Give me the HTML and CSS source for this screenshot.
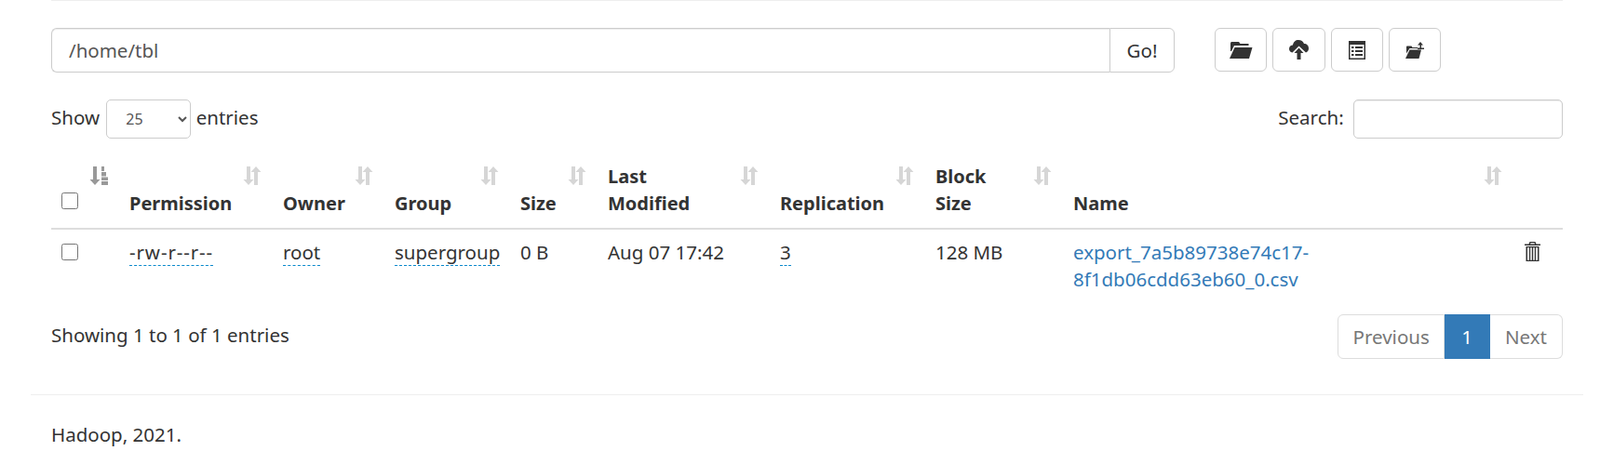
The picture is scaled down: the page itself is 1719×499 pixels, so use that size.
FILE: index.html
```html
<!DOCTYPE html>
<html lang="en">
  <head>
    <meta charset="UTF-8" />
    <title>Browsing HDFS</title>
    <link rel="stylesheet" href="styles.css">
  </head>
  <body>
    <svg class="defs" width="0" height="0">
      <symbol id="sort" viewBox="0 0 20 20">
        <path d="M4 0h4v14h3.500l-5.500 6-5.500-6h3.500z"/>
        <path d="M12 20v-14h-3.500l5.500-6 5.500 6h-3.500v14z"/>
      </symbol>
    </svg>

    <div class="wrap">
      <div class="top-rule"></div>

      <div class="toolbar">
        <div class="path-group">
          <input class="path-input" type="text" value="/home/tbl">
          <button class="go-btn">Go!</button>
        </div>
        <div class="tools">
          <button class="tool-btn">
            <svg width="26" height="18" viewBox="0 0 26 18"><path d="M3 0h8l1.500 2h9v2h-15.500l-3 6-1 0v-8a2 2 0 0 1 1-2z"/><path d="M6.500 6h19l-3.500 12h-21z"/></svg>
          </button>
          <button class="tool-btn">
            <svg width="21" height="21" viewBox="0 0 21 21"><path d="M3.500 13.500c-2.500-.5-3.500-2.500-3.500-4 0-2.500 2-4 4-4 .5-3.500 3-5.500 6-5.500s5 1.500 6 4c3 0 5 2 5 5 0 2-1 3.500-3 4.500l-7.500-7z"/><path d="M10.500 8.500l5 5.500h-3v7h-4v-7h-3z"/></svg>
          </button>
          <button class="tool-btn">
            <svg width="18" height="20" viewBox="0 0 18 20"><path fill-rule="evenodd" d="M0 0h18v20h-18zM1.500 4v14.500h15v-14.500zM3 6h2.500v2h-2.500zM7 6h8v2h-8zM3 10h2.500v2h-2.500zM7 10h8v2h-8zM3 14h2.500v2h-2.500zM7 14h8v2h-8z"/></svg>
          </button>
          <button class="tool-btn">
            <svg width="20" height="18" viewBox="0 0 20 18"><path d="M1.500 4.500h5l1 1.500h5.500v1h-8.500l-3.500 5.500v-7a1 1 0 0 1 .5-1z"/><path d="M4.500 8.500h12.500l-2.500 9.500h-14.500z"/><path d="M16 0l3 3.500h-2v3h3v1.500h-7v-1.500h2.500v-3h-2.500z"/></svg>
          </button>
        </div>
      </div>

      <div class="dt-top">
        <label class="dt-length">Show
          <select class="dt-select"><option>25</option><option>50</option></select>
          entries</label>
        <label class="dt-search">Search: <input class="search-input" type="search"></label>
      </div>

      <table class="files">
        <colgroup>
          <col class="c-check"><col class="c-perm"><col class="c-owner"><col class="c-group"><col class="c-size">
          <col class="c-date"><col class="c-repl"><col class="c-block"><col class="c-name"><col class="c-del">
        </colgroup>
        <thead>
          <tr>
            <th>
              <input type="checkbox">
              <svg class="sort-icon active" viewBox="0 0 20 20"><path d="M4 0h4v14h3.500l-5.500 6-5.500-6h3.500z"/><path d="M13 0h3v5h-3zM13 6h5v4.500h-5zM13 11.500h7v3.500h-7zM13 16h7v4h-7z"/></svg>
            </th>
            <th>Permission<svg class="sort-icon"><use href="#sort"/></svg></th>
            <th>Owner<svg class="sort-icon"><use href="#sort"/></svg></th>
            <th>Group<svg class="sort-icon"><use href="#sort"/></svg></th>
            <th>Size<svg class="sort-icon"><use href="#sort"/></svg></th>
            <th>Last Modified<svg class="sort-icon"><use href="#sort"/></svg></th>
            <th>Replication<svg class="sort-icon"><use href="#sort"/></svg></th>
            <th>Block Size<svg class="sort-icon"><use href="#sort"/></svg></th>
            <th>Name<svg class="sort-icon"><use href="#sort"/></svg></th>
            <th></th>
          </tr>
        </thead>
        <tbody>
          <tr>
            <td><input type="checkbox"></td>
            <td><span class="editable perm">-rw-r--r--</span></td>
            <td><span class="editable">root</span></td>
            <td><span class="editable">supergroup</span></td>
            <td>0 B</td>
            <td>Aug 07 17:42</td>
            <td><span class="editable">3</span></td>
            <td>128 MB</td>
            <td><a class="file-link" href="#">export_7a5b89738e74c17-8f1db06cdd63eb60_0.csv</a></td>
            <td>
              <svg class="trash" width="17" height="21" viewBox="0 0 17 21"><path fill-rule="evenodd" d="M5.500 0h6l1 2.500h4.500v1.500h-17v-1.500h4.500zM6.500 1.200l-.5 1.300h5l-.5-1.300zM1.500 5h14v16h-14zM3 6.200v13.600h2v-13.600zM6.200 6.200v13.600h1.600v-13.600zM9.200 6.200v13.600h1.600v-13.600zM12 6.200v13.600h2v-13.600z"/></svg>
            </td>
          </tr>
        </tbody>
      </table>

      <div class="dt-bottom">
        <div class="dt-info">Showing 1 to 1 of 1 entries</div>
        <div class="pager">
          <a class="page-link" href="#">Previous</a>
          <a class="page-link current" href="#">1</a>
          <a class="page-link" href="#">Next</a>
        </div>
      </div>

      <hr class="foot-rule">
      <div class="footer">Hadoop, 2021.</div>
    </div>
  </body>
</html>
```

FILE: styles.css
```css
html, body {
  margin: 0;
  background-color: #fff;
}

body {
  font-family: "Noto Sans", Arial, sans-serif;
  font-size: 20.5px;
  line-height: 29px;
  color: #333;
  overflow: hidden;
}

.defs {
  display: block;
  height: 0;
}

.wrap {
  width: 1668px;
  margin-left: 33px;
  padding: 0 22px;
  box-sizing: border-box;
}

.top-rule {
  height: 1px;
  background-color: #eee;
}

/* path bar and buttons */
.toolbar {
  display: flex;
  align-items: flex-start;
  gap: 43px;
  margin-top: 29px;
}

.path-group {
  display: flex;
  width: 1207px;
  height: 48px;
}

.path-input {
  flex: 1;
  min-width: 0;
  box-sizing: border-box;
  padding: 0 18px;
  border: 1px solid #ccc;
  border-right: none;
  border-radius: 6px 0 0 6px;
  box-shadow: inset 0 1px 1px rgba(0, 0, 0, 0.075);
  font: inherit;
  color: #555;
}

.go-btn {
  width: 70px;
  padding: 0;
  background-color: #fff;
  border: 1px solid #ccc;
  border-radius: 0 6px 6px 0;
  font: inherit;
  color: #333;
}

.tools {
  display: flex;
  gap: 6px;
}

.tool-btn {
  display: flex;
  align-items: center;
  justify-content: center;
  width: 56.300px;
  height: 47px;
  padding: 0;
  background-color: #fff;
  border: 1px solid #ccc;
  border-radius: 6px;
}

.tool-btn svg {
  fill: #333;
}

/* datatable controls */
.dt-top {
  display: flex;
  justify-content: space-between;
  align-items: center;
  margin-top: 29px;
  margin-bottom: 15px;
}

.dt-select {
  width: 91px;
  height: 42px;
  margin: 0 0 0 2px;
  padding: 0 16px;
  background-color: #fff;
  border: 1px solid #ccc;
  border-radius: 5px;
  font-family: inherit;
  font-size: 16px;
  color: #555;
  vertical-align: middle;
}

.search-input {
  width: 225px;
  height: 42px;
  box-sizing: border-box;
  margin-left: 5px;
  border: 1px solid #ccc;
  border-radius: 5px;
  box-shadow: inset 0 1px 1px rgba(0, 0, 0, 0.075);
  vertical-align: middle;
}

/* file table */
.files {
  width: 1624px;
  table-layout: fixed;
  border-collapse: collapse;
}

.c-check { width: 73px; }
.c-perm { width: 165px; }
.c-owner { width: 120px; }
.c-group { width: 135px; }
.c-size { width: 94px; }
.c-date { width: 185px; }
.c-repl { width: 167px; }
.c-block { width: 148px; }
.c-name { width: 484px; }
.c-del { width: 53px; }

.files th {
  position: relative;
  padding: 11px 42px 12px 11px;
  border-bottom: 2px solid #ddd;
  text-align: left;
  vertical-align: bottom;
  font-size: 20px;
  font-weight: 700;
}

.files td {
  padding: 10px 11px 11px;
  vertical-align: top;
}

.files td input[type="checkbox"],
.files th input[type="checkbox"] {
  display: block;
  width: 18px;
  height: 18px;
  margin: 5px 0 0;
}

.files th input[type="checkbox"] {
  margin: 0 0 8px;
}

.sort-icon {
  position: absolute;
  top: 15px;
  right: 12px;
  width: 20px;
  height: 20px;
  fill: #d6d6d6;
}

.sort-icon.active {
  right: auto;
  left: 41px;
  fill: #999;
}

.editable {
  border-bottom: 1px dashed #0088cc;
}

.perm {
  letter-spacing: 0.9px;
}

.file-link {
  display: inline-block;
  max-width: 320px;
  color: #337ab7;
  text-decoration: none;
}

.trash {
  display: block;
  fill: #333;
  margin: 3px 0 0 1px;
}

/* info and pager */
.dt-bottom {
  display: flex;
  justify-content: space-between;
  align-items: flex-start;
  margin-top: 12px;
}

.dt-info {
  padding-top: 8px;
}

.pager {
  display: flex;
  height: 48px;
}

.page-link {
  display: flex;
  align-items: center;
  padding: 0 17px;
  background-color: #fff;
  border: 1px solid #ddd;
  border-left: none;
  color: #777;
  text-decoration: none;
}

.page-link:first-child {
  padding: 0 15.500px;
  border-left: 1px solid #ddd;
  border-radius: 6px 0 0 6px;
}

.page-link:last-child {
  padding: 0 16px;
  border-radius: 0 6px 6px 0;
}

.page-link.current {
  padding: 0 18px;
  background-color: #337ab7;
  border-color: #337ab7;
  color: #fff;
}

/* footer */
.foot-rule {
  margin: 38px -22px 0;
  border: none;
  border-top: 1px solid #eee;
}

.footer {
  margin-top: 28px;
}
```
